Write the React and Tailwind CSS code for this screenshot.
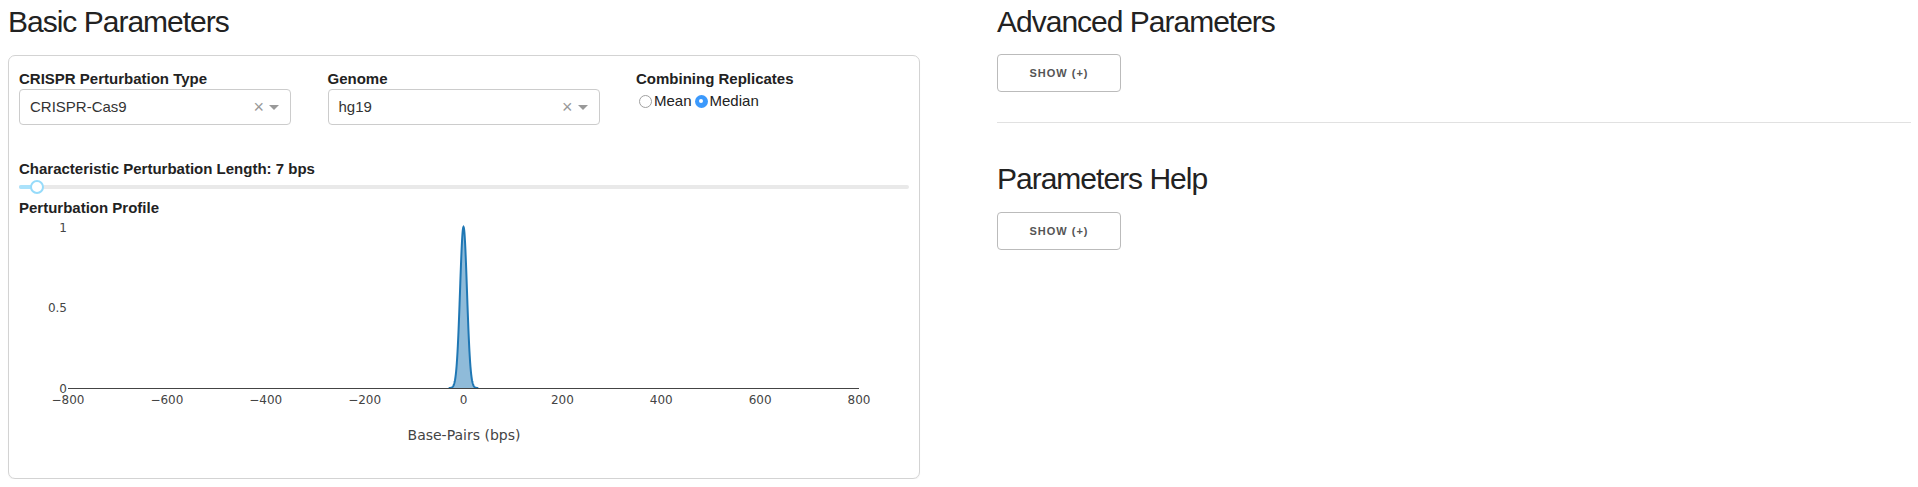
import React from 'react';

const Label = ({ children }) => (
  <div className="h-5 text-[15px] font-bold leading-5 text-[#222]">{children}</div>
);

const Select = ({ value }) => (
  <div className="flex h-9 items-center rounded border border-[#ccc] bg-white pl-[10px] pr-[11px]">
    <span className="flex-1 text-[15px] text-[#333]">{value}</span>
    <span className="text-[18px] leading-none text-[#999]">×</span>
    <span className="ml-[5px] h-0 w-0 border-x-[5px] border-t-[5px] border-x-transparent border-t-[#999]" />
  </div>
);

const Radio = ({ checked, label }) => (
  <label className="ml-[3px] flex items-center">
    {checked ? (
      <span className="flex h-[13px] w-[13px] items-center justify-center rounded-full bg-[#3b99fc]">
        <span className="h-[4px] w-[4px] rounded-full bg-white" />
      </span>
    ) : (
      <span className="h-[13px] w-[13px] rounded-full border border-[#a0a0a0] bg-white" />
    )}
    <span className="ml-[2px]">{label}</span>
  </label>
);

const ShowButton = () => (
  <button className="h-[38px] w-[124px] rounded border border-[#bbb] bg-white text-[11px] font-semibold uppercase tracking-[1px] text-[#555]">
    Show (+)
  </button>
);

// peak shape, sigma ~7 bps
const toX = (v) => 49 + (v + 800) * 0.494375;
const toY = (v) => 170 - v * 161;

const buildPeak = () => {
  const pts = [];
  for (let bp = -30; bp <= 30; bp += 0.5) {
    pts.push([toX(bp), toY(Math.exp(-(bp * bp) / 98))]);
  }
  const line = pts.map((p, i) => `${i ? 'L' : 'M'}${p[0].toFixed(2)},${p[1].toFixed(2)}`).join(' ');
  const area = `${line} L${toX(30).toFixed(2)},170 L${toX(-30).toFixed(2)},170 Z`;
  return { line, area };
};

const ProfileChart = () => {
  const { line, area } = buildPeak();
  const ticks = [-800, -600, -400, -200, 0, 200, 400, 600, 800];
  return (
    <svg width="889" height="255" className="block" style={{ fontFamily: '"DejaVu Sans", Verdana, sans-serif' }}>
      <path d={area} fill="rgba(31,119,180,0.5)" />
      <path d={line} fill="none" stroke="#1f77b4" strokeWidth="2" />
      <line x1="49" y1="170.5" x2="840" y2="170.5" stroke="#444" strokeWidth="1" />
      <g fontSize="12" fill="#444" textAnchor="end">
        <text x="48" y="13.5">1</text>
        <text x="48" y="94">0.5</text>
        <text x="48" y="174.5">0</text>
      </g>
      <g fontSize="12" fill="#444" textAnchor="middle">
        {ticks.map((t) => (
          <text key={t} x={toX(t)} y="185.5">
            {t < 0 ? `\u2212${Math.abs(t)}` : t}
          </text>
        ))}
      </g>
      <text x="445" y="222" fontSize="14" fill="#444" textAnchor="middle">
        Base-Pairs (bps)
      </text>
    </svg>
  );
};

export default function App() {
  return (
    <div className="flex bg-white pt-[2px] text-[15px] text-[#222]" style={{ fontFamily: '"Liberation Sans", Arial, sans-serif' }}>
      <div className="ml-[8px] w-[912px]">
        <h3 className="text-[30px] font-light leading-[39px] tracking-[-1px]">Basic Parameters</h3>

        <div className="mt-[14px] h-[424px] rounded-[7px] border border-[#d3d3d3] pl-[10px] pr-[10px] pt-[13px] shadow-[0_1px_1px_rgba(0,0,0,0.06)]">
          <div className="flex gap-[36.5px]">
            <div className="w-[272px]">
              <Label>CRISPR Perturbation Type</Label>
              <Select value="CRISPR-Cas9" />
            </div>
            <div className="w-[272px]">
              <Label>Genome</Label>
              <Select value="hg19" />
            </div>
            <div className="w-[272px]">
              <Label>Combining Replicates</Label>
              <div className="flex h-6 items-center leading-6">
                <Radio label="Mean" />
                <Radio label="Median" checked />
              </div>
            </div>
          </div>

          <div className="mt-[34px]">
            <Label>Characteristic Perturbation Length: 7 bps</Label>
            <div className="relative mt-[1px] flex h-[14px] w-[890px] items-center">
              <div className="h-[4px] w-full rounded-full bg-[#e9e9e9]" />
              <div className="absolute left-0 top-[5px] h-[4px] w-[18px] rounded-full bg-[#abe2fb]" />
              <div className="absolute left-[11px] top-0 h-[14px] w-[14px] rounded-full border-2 border-[#96dbfa] bg-white" />
            </div>
          </div>

          <div className="mt-[4px]">
            <Label>Perturbation Profile</Label>
            <ProfileChart />
          </div>
        </div>
      </div>

      <div className="ml-[77px] w-[914px]">
        <h3 className="text-[30px] font-light leading-[39px] tracking-[-1px]">Advanced Parameters</h3>
        <div className="mt-[13px]">
          <ShowButton />
        </div>
        <hr className="mt-[30px] border-t border-[#e1e1e1]" />
        <h3 className="mt-[36px] text-[30px] font-light leading-[39px] tracking-[-1px]">Parameters Help</h3>
        <div className="mt-[14px]">
          <ShowButton />
        </div>
      </div>
    </div>
  );
}
